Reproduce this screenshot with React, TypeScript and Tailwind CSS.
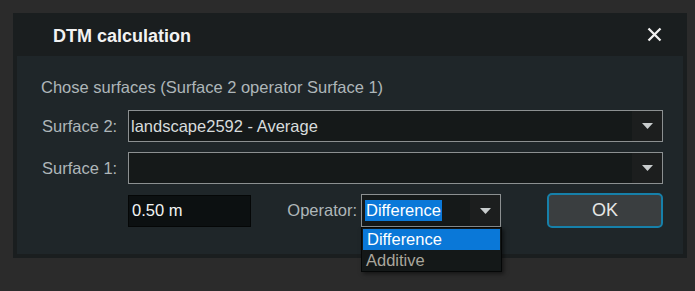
const font = { fontFamily: '"Liberation Sans", Arial, sans-serif' }

const Arrow = () => (
    <svg width="11" height="6" viewBox="0 0 11 6">
        <path d="M0 0 H11 L5.5 6 Z" fill="#c8cccd" />
    </svg>
)

const SurfaceSelect = ({ label, value }: { label: string; value: string }) => {
    return (
        <div className="flex items-center h-[32px]">
            <div className="w-[87px] pl-[1px] text-[16.5px] text-[#aeb6b9]">{label}</div>
            <div className="flex-1 h-full flex items-stretch border-[1.5px] border-[#8c9091] bg-[#151919]">
                <div className="flex-1 flex items-center pl-[2px] text-[16.5px] text-[#d8dcdc]">{value}</div>
                <div className="w-[30px] flex items-center justify-center bg-[#1c1e1e]">
                    <Arrow />
                </div>
            </div>
        </div>
    )
}

export default function App() {
    return (
        <div className="w-[695px] h-[291px] bg-[#2b2b2b] pt-[13px] pl-[13px]" style={font}>
            <div className="w-[674px] h-[245px] bg-[#1a1e1f] flex flex-col">
                <div className="h-[43px] flex items-center justify-between pl-[40px] pr-[25px] pt-[3px]">
                    <div className="text-[18px] font-bold text-[#f2f2f2]">DTM calculation</div>
                    <svg width="15" height="15" viewBox="0 0 15 15" className="-mt-[3px]">
                        <path d="M1.5 1.5 L13.5 13.5 M13.5 1.5 L1.5 13.5" stroke="#f0f0f0" strokeWidth="2.3" />
                    </svg>
                </div>
                <div className="mx-[4px] h-[198px] bg-[#1f2629] pl-[24px] pr-[20px] pt-[20px]">
                    <div className="text-[16.5px] text-[#aeb6b9] leading-[22px]">
                        Chose surfaces (Surface 2 operator Surface 1)
                    </div>
                    <div className="mt-[12px] flex flex-col gap-[10px]">
                        <SurfaceSelect label="Surface 2:" value="landscape2592 - Average" />
                        <SurfaceSelect label="Surface 1:" value="" />
                    </div>
                    <div className="mt-[9px] flex items-center h-[35px] pl-[87px]">
                        <div className="w-[123px] h-[32px] bg-[#0c1011] border border-[#050707] flex items-center pl-[3px] text-[16.5px] text-[#f2f4f4]">
                            0.50 m
                        </div>
                        <div className="w-[106px] text-right text-[16.5px] text-[#aeb6b9]">Operator:</div>
                        <div className="relative ml-[4px] w-[140px] h-[33px]">
                            <div className="h-full flex items-stretch border-[1.5px] border-[#8c9091] bg-[#151919]">
                                <div className="flex-1 flex items-center pl-[3px]">
                                    <span className="bg-[#0a78d8] text-white text-[16.5px] leading-[21px] px-[1px]">Difference</span>
                                </div>
                                <div className="w-[30px] flex items-center justify-center bg-[#1c1e1e]">
                                    <Arrow />
                                </div>
                            </div>
                            <div className="absolute left-0 top-[33px] w-[141px] bg-[#141818] border border-[#050707] shadow-[2px_2px_4px_rgba(0,0,0,0.5)] text-[16.5px] pb-[1px]">
                                <div className="bg-[#0a78d8] text-white h-[21px] flex items-center pl-[4px] mx-[1px] mt-[1px]">Difference</div>
                                <div className="text-[#a9a69c] h-[20px] flex items-center pl-[4px]">Additive</div>
                            </div>
                        </div>
                        <div className="ml-[46px] w-[116px] h-[35px] rounded-[5px] border-2 border-[#1680aa] bg-[#3a3e40] flex items-center justify-center text-[18px] text-[#e6e6e6]">
                            OK
                        </div>
                    </div>
                </div>
            </div>
        </div>
    )
}
